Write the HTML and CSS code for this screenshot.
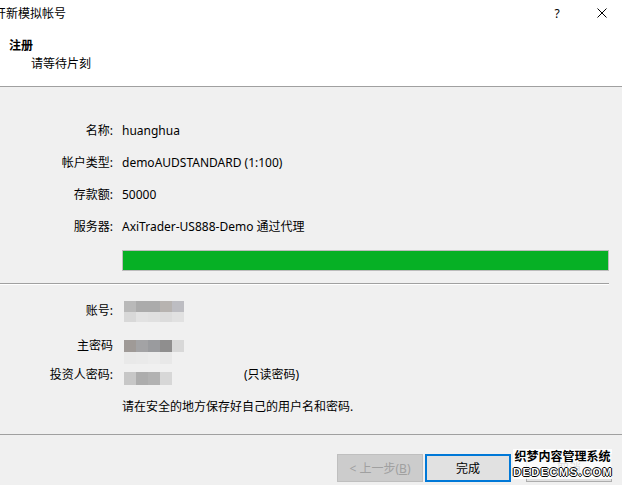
FILE: index.html
```html
<!DOCTYPE html>
<html lang="zh-CN">
<head>
<meta charset="UTF-8">
<meta name="viewport" content="width=device-width, initial-scale=1.0">
<title>开新模拟帐号</title>
<link rel="stylesheet" href="styles.css">
</head>
<body>

<div class="dialog">
    <div class="header">
        <div class="titlebar">
            <span class="title">开新模拟帐号</span>
            <span class="help">?</span>
            <span class="close">
                <svg width="10" height="10" viewBox="0 0 10 10"><path d="M0.5 0.5L9.5 9.5M9.5 0.5L0.5 9.5" stroke="#000" stroke-width="1"/></svg>
            </span>
        </div>
        <div class="caption">注册</div>
        <div class="subcaption">请等待片刻</div>
    </div>

    <div class="fields">
        <div class="row"><span class="label">名称:</span><span class="value">huanghua</span></div>
        <div class="row"><span class="label">帐户类型:</span><span class="value">demoAUDSTANDARD (1:100)</span></div>
        <div class="row"><span class="label">存款额:</span><span class="value">50000</span></div>
        <div class="row"><span class="label">服务器:</span><span class="value">AxiTrader-US888-Demo 通过代理</span></div>
    </div>

    <div class="progress"><div class="progress-fill"></div></div>

    <div class="divider short"></div>

    <div class="fields second">
        <div class="row"><span class="label">账号:</span><span class="value"><span class="mask mask-login"></span></span></div>
        <div class="row"><span class="label">主密码</span><span class="value"><span class="mask mask-master"></span></span></div>
        <div class="row"><span class="label">投资人密码:</span><span class="value"><span class="mask mask-investor"></span><span class="readonly">(只读密码)</span></span></div>
        <div class="row"><span class="label"></span><span class="value note">请在安全的地方保存好自己的用户名和密码.</span></div>
    </div>

    <div class="divider"></div>

    <div class="buttons">
        <button class="btn disabled" disabled>&lt; 上一步(<u>B</u>)</button>
        <button class="btn primary">完成</button>
        <button class="btn cancel">取消</button>
    </div>

    <div class="watermark">
        <div class="wm-cn">织梦内容管理系统</div>
        <div class="wm-en">DEDECMS.COM</div>
    </div>
</div>

</body>
</html>
```

FILE: styles.css
```css
body {
    margin: 0;
    padding: 0;
    font-family: "Noto Sans", "Noto Sans CJK SC", sans-serif;
    font-size: 12px;
    color: #000;
    background: #f0f0f0;
}
.dialog {
    position: relative;
    width: 622px;
    height: 485px;
    overflow: hidden;
    background: #f0f0f0;
}

/* header */
.header {
    background: #fff;
    height: 86px;
    border-bottom: 1px solid #a0a0a0;
}
.titlebar {
    display: flex;
    align-items: center;
    height: 26px;
}
.title {
    flex: 1;
    margin-left: -6px;
}
.help {
    width: 10px;
    margin-right: 35px;
    text-align: center;
}
.close {
    display: flex;
    width: 10px;
    margin-right: 15px;
}
.caption {
    margin-top: 11px;
    padding-left: 9px;
    line-height: 18px;
    font-weight: bold;
}
.subcaption {
    padding-left: 31px;
    line-height: 18px;
}

/* field rows */
.fields {
    padding-top: 27px;
}
.fields.second {
    padding-top: 9px;
}
.row {
    display: grid;
    grid-template-columns: 113px 1fr;
    column-gap: 9px;
    height: 32px;
    align-items: center;
}
.label {
    text-align: right;
}
.value {
    display: flex;
    align-items: center;
}
.readonly {
    margin-left: 72px;
}

/* pixelated masks */
.mask {
    display: block;
    margin-left: 2px;
    height: 21px;
}
.mask-login {
    width: 60px;
    margin-top: 2px;
    background:
        linear-gradient(to right, #b9b9b9 0 12px, #ababab 12px 24px, #ababab 24px 36px, #b7b3b0 36px 48px, #bdbdc2 48px) top / 100% 11px no-repeat,
        linear-gradient(to right, #d8d8d8 0 12px, #e2e2e2 12px 24px, #e0e0e0 24px 36px, #dcdcdc 36px 48px, #e1e1e1 48px) bottom / 100% 10px no-repeat;
}
.mask-master {
    width: 60px;
    height: 24px;
    margin-top: 14px;
    background:
        linear-gradient(to right, #9f9a97 0 12px, #a3a3a5 12px 24px, #9a9b9e 24px 36px, #8f8e8e 36px 48px, #d8d8d8 48px) top / 100% 12px no-repeat,
        linear-gradient(to right, #e9e9e9 0 12px, #eaeaea 12px 24px, #ececec 24px 36px, #e8e8e8 36px 48px, #f0f0f0 48px) bottom / 100% 12px no-repeat;
}
.mask-investor {
    width: 48px;
    height: 13px;
    margin-top: 8px;
    background: linear-gradient(to right, #c7c7c7 0 12px, #adadad 12px 24px, #b2b2b2 24px 36px, #d7d7d7 36px);
}

/* progress */
.progress {
    margin: 8px 0 0 122px;
    width: 485px;
    height: 19px;
    border: 1px solid #bcbcbc;
    background: #e6e6e6;
}
.progress-fill {
    width: 100%;
    height: 100%;
    background: #06b025;
}

.divider {
    margin-top: 12px;
    border-top: 1px solid #a0a0a0;
}
.divider.short {
    margin-top: 12px;
    width: 609px;
    border-bottom: 1px solid #fff;
}

/* buttons */
.buttons {
    display: flex;
    justify-content: flex-end;
    margin-top: 19px;
    padding-right: 10px;
}
.btn {
    width: 86px;
    height: 28px;
    margin-left: 2px;
    font-family: inherit;
    font-size: 12px;
    background: #e1e1e1;
    border: 1px solid #adadad;
    color: #000;
    padding: 0;
}
.btn.disabled {
    background: #cccccc;
    border-color: #bfbfbf;
    color: #a0a0a0;
}
.btn.primary {
    border: 2px solid #0078d7;
}
.btn.cancel {
    margin-left: 15px;
}

/* watermark */
.watermark {
    position: absolute;
    left: 513px;
    top: 449px;
    width: 99px;
    text-align: center;
    background: rgba(255, 255, 255, 0.85);
}
.wm-cn {
    font-size: 12px;
    line-height: 15px;
    font-weight: bold;
    color: #000;
}
.wm-en {
    margin-top: 1px;
    font-family: "Liberation Sans", sans-serif;
    font-size: 11px;
    line-height: 14px;
    font-weight: bold;
    letter-spacing: 1.5px;
    color: #fff;
    text-shadow: 1px 0 #000, -1px 0 #000, 0 1px #000, 0 -1px #000;
}
```
